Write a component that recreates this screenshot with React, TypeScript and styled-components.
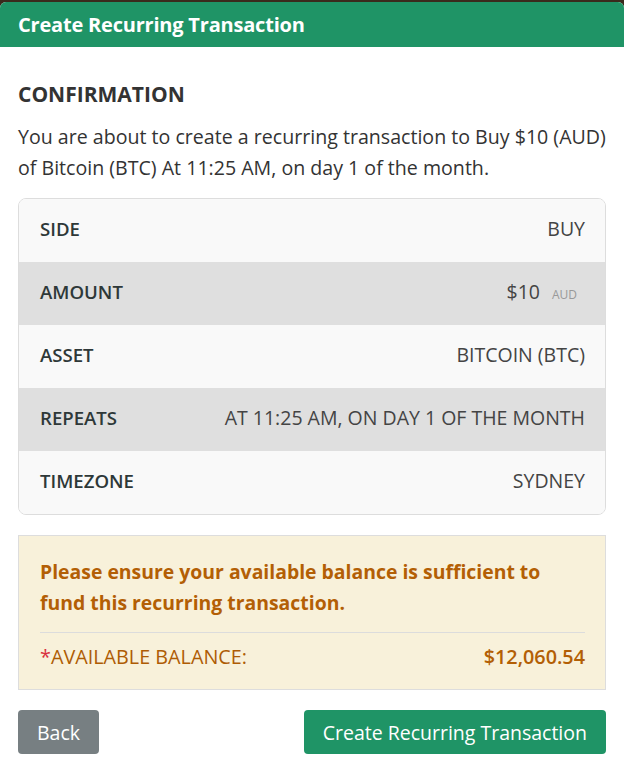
import React from "react";
import styled, { createGlobalStyle } from "styled-components";

const Global = createGlobalStyle`
  html, body { margin: 0; padding: 0; background: #3a2a1c; }
  body { font-family: "Open Sans", "Liberation Sans", sans-serif; }
  * { box-sizing: border-box; }
`;

const Modal = styled.div`
  margin-top: 2px;
  width: 624px;
  height: 766px;
  background: #ffffff;
  border-radius: 6px 6px 0 0;
  overflow: hidden;
  display: flex;
  flex-direction: column;
`;

const Header = styled.div`
  background: #1f9466;
  height: 45px;
  display: flex;
  align-items: center;
  padding: 0 18px;
  color: #fff;
  font-weight: 700;
  font-size: 20px;
  letter-spacing: -0.2px;
`;

const Body = styled.div`
  padding: 31px 18px 0 18px;
  display: flex;
  flex-direction: column;
`;

const Title = styled.h2`
  margin: 0;
  font-size: 21px;
  font-weight: 700;
  color: #333;
  line-height: 32px;
`;

const Intro = styled.p`
  margin: 11px 0 15px;
  font-size: 19.6px;
  line-height: 31px;
  color: #333;
`;

const Card = styled.div`
  border: 1px solid #dddddd;
  border-radius: 8px;
  overflow: hidden;
`;

const Row = styled.div<{ $alt?: boolean }>`
  height: 63px;
  display: flex;
  align-items: center;
  justify-content: space-between;
  padding: 0 20px 4px 21px;
  background: ${(p) => (p.$alt ? "#dfdfdf" : "#f9f9f9")};
  font-size: 19.5px;
  color: #444;
  text-transform: uppercase;
`;

const Label = styled.span`
  font-weight: 600;
  font-size: 18.6px;
  color: #2e3838;
`;

const Value = styled.span`
  display: flex;
  align-items: baseline;
`;

const Unit = styled.span`
  font-size: 12px;
  color: #999;
  margin-left: 12px;
  margin-right: 8px;
`;

const Warning = styled.div`
  margin-top: 20px;
  background: #f8f1da;
  border: 1px solid #dddddd;
  padding: 20px 20px 17px 21px;
  color: #b35f05;
`;

const WarnText = styled.p`
  margin: 0;
  font-size: 19.4px;
  font-weight: 700;
  line-height: 31px;
`;

const Divider = styled.hr`
  border: 0;
  border-top: 1px solid #dcdcdc;
  margin: 14px 0 8px;
`;

const BalanceRow = styled.div`
  display: flex;
  justify-content: space-between;
  font-size: 19.8px;
  line-height: 31px;
`;

const BalanceLabel = styled.span`
  color: #ae5c04;
`;

const Star = styled.span`
  color: #d9303e;
`;

const BalanceValue = styled.span`
  font-weight: 600;
`;

const Actions = styled.div`
  margin-top: 20px;
  display: flex;
  justify-content: space-between;
`;

const Button = styled.button<{ $variant: "secondary" | "primary" }>`
  height: 44px;
  border: 0;
  border-radius: 4px;
  padding: 0 19px;
  font-family: "Open Sans", "Liberation Sans", sans-serif;
  font-size: 19.5px;
  color: #fff;
  background: ${(p) => (p.$variant === "primary" ? "#1f9466" : "#777f82")};
  cursor: pointer;
`;

const rows: { label: string; value: React.ReactNode }[] = [
  { label: "Side", value: "Buy" },
  {
    label: "Amount",
    value: (
      <Value>
        $10<Unit>AUD</Unit>
      </Value>
    ),
  },
  { label: "Asset", value: "Bitcoin (BTC)" },
  { label: "Repeats", value: "At 11:25 AM, on day 1 of the month" },
  { label: "Timezone", value: "Sydney" },
];

export default function App() {
  return (
    <>
      <Global />
      <Modal>
        <Header>Create Recurring Transaction</Header>
        <Body>
          <Title>CONFIRMATION</Title>
          <Intro>
            You are about to create a recurring transaction to Buy $10 (AUD) of
            Bitcoin (BTC) At 11:25 AM, on day 1 of the month.
          </Intro>
          <Card>
            {rows.map((r, i) => (
              <Row key={r.label} $alt={i % 2 === 1}>
                <Label>{r.label}</Label>
                <span>{r.value}</span>
              </Row>
            ))}
          </Card>
          <Warning>
            <WarnText>
              Please ensure your available balance is sufficient to fund this
              recurring transaction.
            </WarnText>
            <Divider />
            <BalanceRow>
              <BalanceLabel>
                <Star>*</Star>AVAILABLE BALANCE:
              </BalanceLabel>
              <BalanceValue>$12,060.54</BalanceValue>
            </BalanceRow>
          </Warning>
          <Actions>
            <Button $variant="secondary">Back</Button>
            <Button $variant="primary">Create Recurring Transaction</Button>
          </Actions>
        </Body>
      </Modal>
    </>
  );
}
